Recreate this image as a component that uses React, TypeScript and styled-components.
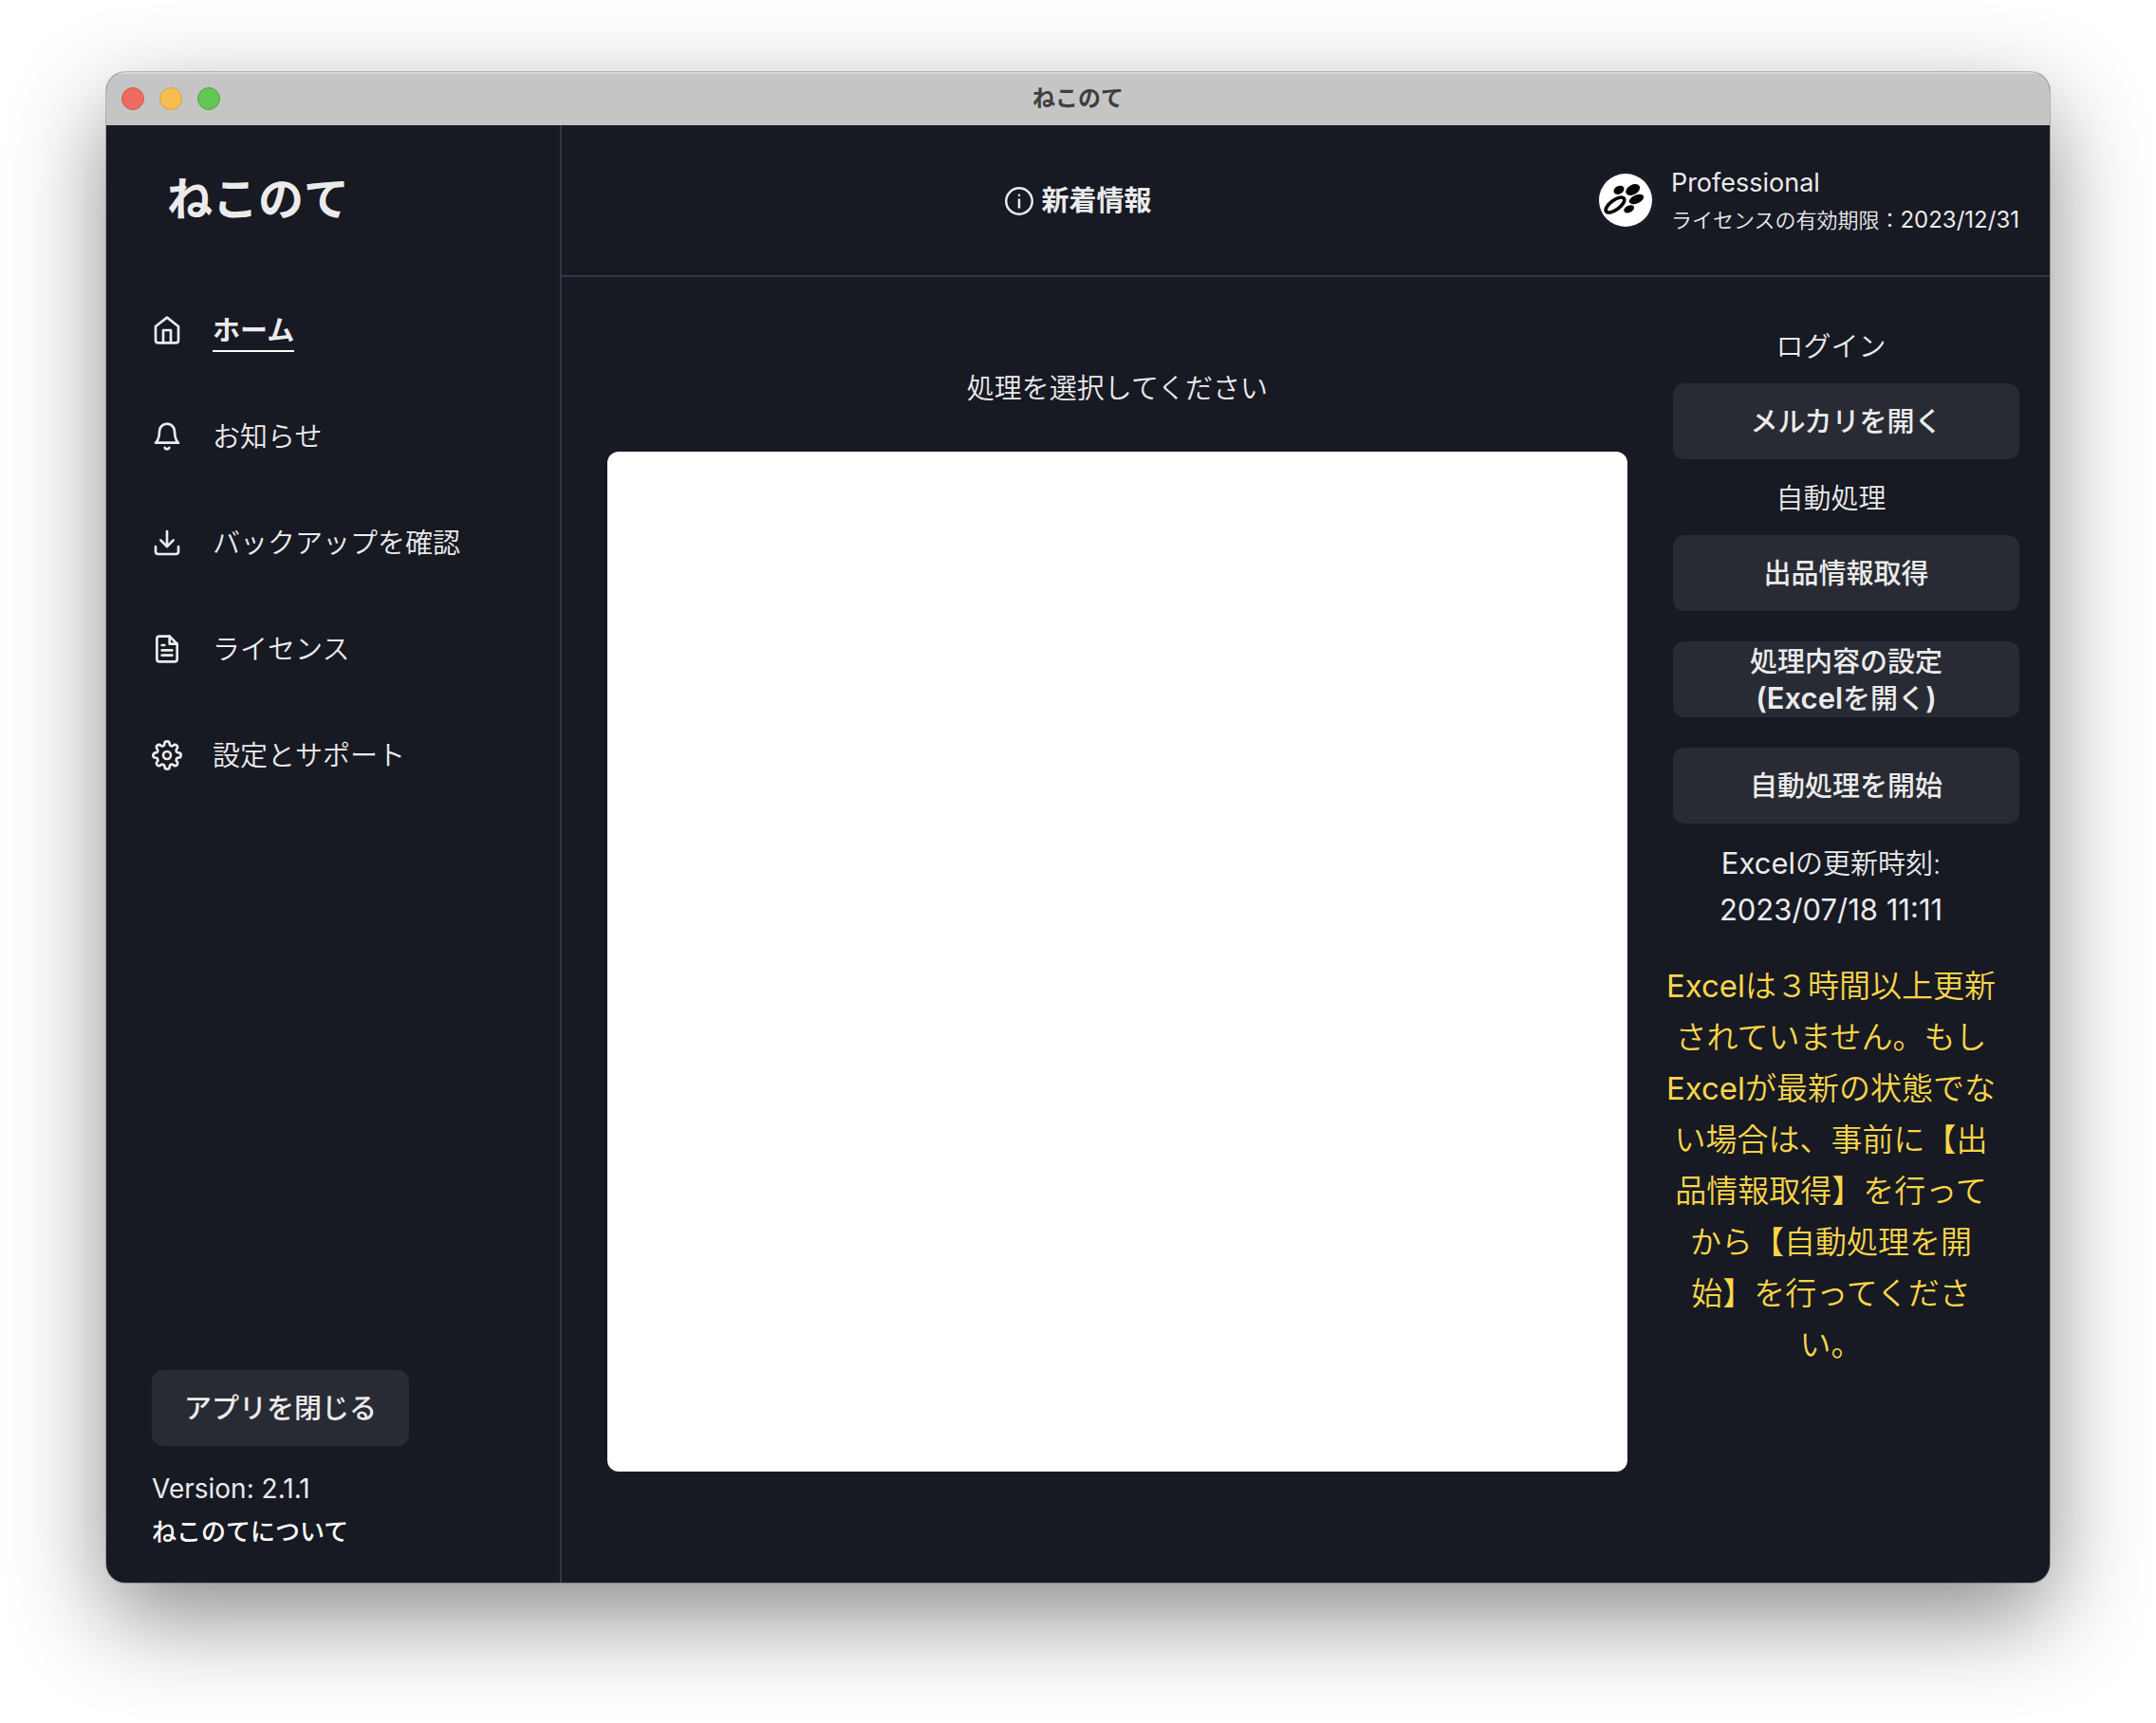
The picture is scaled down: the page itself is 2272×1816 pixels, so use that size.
import React from "react";
import styled, { createGlobalStyle } from "styled-components";
import { FiBell, FiDownload, FiFileText, FiHome, FiSettings } from "react-icons/fi";

const color = {
  bg: "#171923",
  line: "#2d3748",
  text: "#ebebeb",
  button: "#292b34",
  warning: "#fad648",
};

const GlobalStyle = createGlobalStyle`
  *, *::before, *::after { box-sizing: border-box; }
  body {
    margin: 0;
    background: #fff;
    color: ${color.text};
    font-family: Inter, "Noto Sans CJK JP", sans-serif;
    font-size: 29px;
    line-height: 48px;
    font-weight: 400;
  }
  h1, p, ul { margin: 0; padding: 0; }
  ul { list-style: none; }
  button { font: inherit; color: inherit; border: 0; cursor: pointer; }
  a { color: inherit; text-decoration: none; }
`;

const Desktop = styled.div`
  min-height: 100vh;
  display: flex;
  padding: 76px 112px 148px;
`;

const Window = styled.div`
  flex: 1;
  display: flex;
  flex-direction: column;
  border-radius: 20px;
  overflow: hidden;
  background: ${color.bg};
  box-shadow: 0 0 0 1px rgba(0, 0, 0, 0.22), 0 36px 100px rgba(0, 0, 0, 0.46);
`;

const TitleBar = styled.div`
  display: grid;
  grid-template-columns: 1fr auto 1fr;
  align-items: center;
  height: 56px;
  padding: 0 16px;
  background: #c5c5c5;
  box-shadow: inset 0 2px 0 #d8d8d8;
  color: #3f3f3f;
  font-size: 24px;
  font-weight: 700;
`;

const Lights = styled.div`
  display: flex;
  gap: 16px;
`;

const Light = styled.button<{ $fill: string; $rim: string }>`
  width: 24px;
  height: 24px;
  padding: 0;
  border: 1px solid ${(p) => p.$rim};
  border-radius: 50%;
  background: ${(p) => p.$fill};
`;

const Shell = styled.div`
  flex: 1;
  display: grid;
  grid-template-columns: 480px 1fr;
`;

const Sidebar = styled.aside`
  display: flex;
  flex-direction: column;
  padding: 48px 48px 30px;
  border-right: 2px solid ${color.line};
`;

const Brand = styled.h1`
  padding: 0 16px;
  font-size: 48px;
  line-height: 60px;
  font-weight: 600;
`;

const NavList = styled.ul`
  display: flex;
  flex-direction: column;
  gap: 64px;
  padding-top: 84px;
`;

const NavLink = styled.a`
  display: flex;
  align-items: center;
  gap: 32px;
  height: 48px;
  svg { width: 32px; height: 32px; flex: none; }
`;

const NavText = styled.span<{ $active?: boolean }>`
  padding-top: 4px;
  line-height: 40px;
  border-bottom: 2px solid ${(p) => (p.$active ? "#fff" : "transparent")};
  font-weight: ${(p) => (p.$active ? 600 : 350)};
`;

const SidebarFoot = styled.div`
  display: flex;
  flex-direction: column;
  align-items: flex-start;
  margin-top: auto;
  font-size: 26px;
  line-height: 46px;
`;

const Button = styled.button`
  min-height: 80px;
  padding: 2px 34px 0;
  border-radius: 12px;
  background: ${color.button};
  font-size: 29px;
  line-height: 38px;
  font-weight: 500;
`;

const Version = styled.p`
  padding-top: 22px;
  font-size: 28px;
`;

const AboutLink = styled.a`
  color: #fff;
  font-weight: 500;
`;

const Main = styled.div`
  display: flex;
  flex-direction: column;
`;

const Header = styled.header`
  display: flex;
  justify-content: space-between;
  align-items: center;
  height: 160px;
  padding-right: 32px;
  border-bottom: 2px solid ${color.line};
`;

const NewsButton = styled.button`
  display: flex;
  align-items: center;
  gap: 8px;
  padding: 2px 0 0;
  background: none;
  font-weight: 700;
  svg { width: 30px; height: 30px; }
`;

const Account = styled.div`
  display: flex;
  align-items: center;
  gap: 16px;
`;

const Avatar = styled.svg`
  width: 64px;
  height: 64px;
`;

const Plan = styled.p`
  font-size: 27px;
  line-height: 42px;
`;

const Expiry = styled.p`
  font-size: 22px;
  line-height: 36px;
  font-weight: 350;
`;

const Latin = styled.span<{ $size: number; $weight?: number }>`
  font-size: ${(p) => p.$size}px;
  font-weight: ${(p) => p.$weight ?? 400};
`;

const Content = styled.main`
  flex: 1;
  display: grid;
  grid-template-columns: 1fr 397px;
  gap: 16px;
  align-items: start;
  padding: 48px 32px 48px 48px;
`;

const Stage = styled.section`
  display: flex;
  flex-direction: column;
  gap: 42px;
  padding-top: 46px;
`;

const Prompt = styled.p`
  text-align: center;
  font-weight: 350;
`;

const Canvas = styled.div`
  aspect-ratio: 1;
  border-radius: 12px;
  background: #fff;
`;

const Actions = styled.section`
  display: flex;
  flex-direction: column;
`;

const Label = styled.p`
  padding: 2px 20px 0;
  text-align: center;
  font-weight: 350;
`;

const ButtonStack = styled.div`
  display: flex;
  flex-direction: column;
  gap: 32px;
  padding: 14px 0 16px 32px;
`;

const Warning = styled.p`
  padding: 28px 20px 0;
  color: ${color.warning};
  text-align: center;
  text-spacing-trim: space-all;
  font-family: Inter, "Noto Sans CJK JP DemiLight", "Noto Sans CJK JP", sans-serif;
  font-size: 33px;
  line-height: 54px;
  font-weight: 400;
`;

const InfoIcon = () => (
  <svg viewBox="0 0 24 24" aria-hidden="true">
    <circle cx="12" cy="12" r="11" fill="none" stroke="currentColor" strokeWidth="2" />
    <path d="M11.96 11v6" stroke="currentColor" strokeWidth="2" strokeLinecap="square" />
    <circle cx="11.96" cy="7" r="1" fill="currentColor" />
  </svg>
);

const PawLogo = () => (
  <Avatar viewBox="0 0 64 64" role="img" aria-label="ねこのて">
    <circle cx="32" cy="32" r="32" fill="#1a1d29" />
    <circle cx="32" cy="32" r="28" fill="#fff" />
    <g fill="#050505">
      <ellipse cx="25" cy="21.3" rx="5.8" ry="4.2" transform="rotate(-28 25 21.3)" />
      <ellipse cx="39.7" cy="21" rx="8" ry="5.2" transform="rotate(-28 39.7 21)" />
      <ellipse cx="43.5" cy="31" rx="8.2" ry="4.5" transform="rotate(-24 43.5 31)" />
      <ellipse cx="35.7" cy="41.3" rx="5.8" ry="3.6" transform="rotate(-26 35.7 41.3)" />
    </g>
    <ellipse cx="21" cy="37" rx="11.6" ry="5" fill="none" stroke="#050505" strokeWidth="3.6" transform="rotate(-36 21 37)" />
  </Avatar>
);

const navItems = [
  { label: "ホーム", icon: <FiHome />, active: true },
  { label: "お知らせ", icon: <FiBell /> },
  { label: "バックアップを確認", icon: <FiDownload /> },
  { label: "ライセンス", icon: <FiFileText /> },
  { label: "設定とサポート", icon: <FiSettings /> },
];

export default function App() {
  return (
    <>
      <GlobalStyle />
      <Desktop lang="ja">
        <Window>
          <TitleBar>
            <Lights>
              <Light $fill="#ed6b5f" $rim="#d5564b" aria-label="閉じる" />
              <Light $fill="#f5be4f" $rim="#d8a13c" aria-label="最小化" />
              <Light $fill="#62c655" $rim="#4fa73f" aria-label="最大化" />
            </Lights>
            ねこのて
          </TitleBar>
          <Shell>
            <Sidebar>
              <Brand>ねこのて</Brand>
              <nav>
                <NavList>
                  {navItems.map((item) => (
                    <li key={item.label}>
                      <NavLink href="#" aria-current={item.active ? "page" : undefined}>
                        {item.icon}
                        <NavText $active={item.active}>{item.label}</NavText>
                      </NavLink>
                    </li>
                  ))}
                </NavList>
              </nav>
              <SidebarFoot>
                <Button>アプリを閉じる</Button>
                <Version>Version: 2.1.1</Version>
                <AboutLink href="#">ねこのてについて</AboutLink>
              </SidebarFoot>
            </Sidebar>
            <Main>
              <Header>
                <span />
                <NewsButton>
                  <InfoIcon />
                  新着情報
                </NewsButton>
                <Account>
                  <PawLogo />
                  <div>
                    <Plan>Professional</Plan>
                    <Expiry>
                      ライセンスの有効期限：<Latin $size={24}>2023/12/31</Latin>
                    </Expiry>
                  </div>
                </Account>
              </Header>
              <Content>
                <Stage>
                  <Prompt>処理を選択してください</Prompt>
                  <Canvas />
                </Stage>
                <Actions>
                  <Label>ログイン</Label>
                  <ButtonStack>
                    <Button>メルカリを開く</Button>
                  </ButtonStack>
                  <Label>自動処理</Label>
                  <ButtonStack>
                    <Button>出品情報取得</Button>
                    <Button>
                      処理内容の設定
                      <br />
                      <Latin $size={31} $weight={600}>(Excel</Latin>を開く<Latin $size={31} $weight={600}>)</Latin>
                    </Button>
                    <Button>自動処理を開始</Button>
                  </ButtonStack>
                  <Label>
                    <Latin $size={31}>Excel</Latin>の更新時刻:
                    <br />
                    <Latin $size={31}>2023/07/18 11:11</Latin>
                  </Label>
                  <Warning>
                    Excelは３時間以上更新されていません。もしExcelが最新の状態でない場合は、事前に【出品情報取得】を行ってから【自動処理を開始】を行ってください。
                  </Warning>
                </Actions>
              </Content>
            </Main>
          </Shell>
        </Window>
      </Desktop>
    </>
  );
}
